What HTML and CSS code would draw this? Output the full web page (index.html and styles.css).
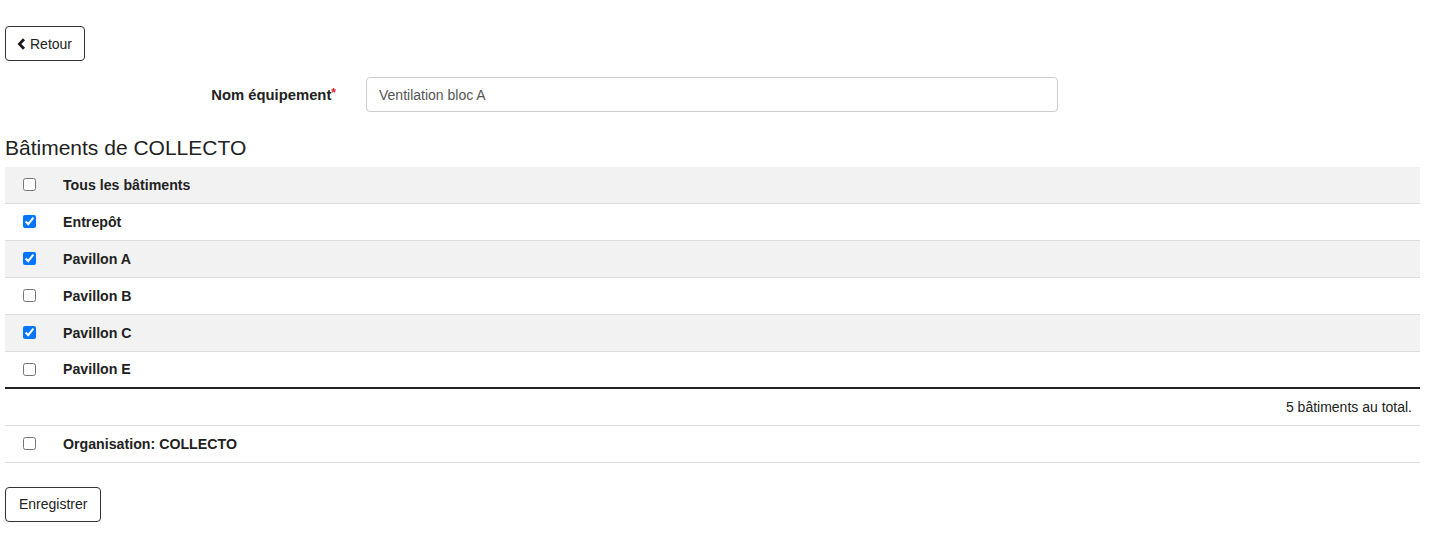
FILE: index.html
```html
<!DOCTYPE html>
<html lang="fr">
<head>
<meta charset="utf-8">
<link rel="stylesheet" href="styles.css">
</head>
<body>
<div class="container">
  <div class="top">
    <button class="btn btn-back" type="button"><svg class="chev" width="9" height="12" viewBox="0 0 9 12"><path d="M7 1.2 L2.4 6 L7 10.8" fill="none" stroke="#1a1a1a" stroke-width="2.8" stroke-linejoin="miter"/></svg>Retour</button>
  </div>
  <div class="form-row">
    <label class="lbl">Nom équipement<span class="req">*</span></label>
    <div class="field"><input class="input" type="text" value="Ventilation bloc A"></div>
  </div>
  <h3 class="title">Bâtiments de COLLECTO</h3>
  <table class="tbl">
    <thead>
      <tr class="grey"><td class="cb"><input type="checkbox"></td><td class="name">Tous les bâtiments</td></tr>
    </thead>
    <tbody>
      <tr><td class="cb"><input type="checkbox" checked></td><td class="name">Entrepôt</td></tr>
      <tr class="grey"><td class="cb"><input type="checkbox" checked></td><td class="name">Pavillon A</td></tr>
      <tr><td class="cb"><input type="checkbox"></td><td class="name">Pavillon B</td></tr>
      <tr class="grey"><td class="cb"><input type="checkbox" checked></td><td class="name">Pavillon C</td></tr>
      <tr class="last"><td class="cb"><input type="checkbox"></td><td class="name">Pavillon E</td></tr>
    </tbody>
    <tfoot>
      <tr class="total"><td colspan="2">5 bâtiments au total.</td></tr>
      <tr class="org"><td class="cb"><input type="checkbox"></td><td class="name">Organisation: COLLECTO</td></tr>
    </tfoot>
  </table>
  <div class="bottom">
    <button class="btn" type="button">Enregistrer</button>
  </div>
</div>
</body>
</html>
```
FILE: styles.css
```css
* { box-sizing: border-box; }
html, body { margin: 0; padding: 0; background: #fff; }
body { font-family: "Liberation Sans", Arial, sans-serif; font-size: 14px; color: #222; }
.container { width: 1415px; padding-left: 5px; }
.top { padding-top: 26px; }
.btn {
  height: 35px; padding: 0 13px; border: 1px solid #333; border-radius: 4px;
  background: #fff; font-family: inherit; font-size: 14px; color: #222;
  display: inline-flex; align-items: center; gap: 4px;
}
.btn-back { padding: 0 12px 0 11px; }
.chev { display: block; }
.form-row { display: flex; margin-top: 16px; align-items: center; }
.lbl { width: 331px; text-align: right; font-weight: bold; font-size: 14.8px; padding-right: 0; }
.req { color: #e02020; font-size: 12px; vertical-align: 3px; }
.field { width: 722px; padding-left: 15px; padding-right: 15px; margin-left: 15px; }
.input {
  width: 692px; height: 35px; border: 1px solid #ccc; border-radius: 4px;
  padding: 0 12px; font-family: inherit; font-size: 14px; color: #555;
}
.title { font-size: 21px; font-weight: normal; margin: 23px 0 6px; line-height: 26px; color: #222; }
.tbl { width: 1415px; border-collapse: collapse; margin-top: 0; }
.tbl td { height: 37px; padding: 0; border-top: 1px solid #ddd; vertical-align: middle; }
.tbl thead td { border-top: none; height: 36px; }
.tbl tr.grey td { background: #f2f2f2; }
.tbl td.cb { width: 58px; padding-left: 18px; }
.tbl td.cb input { margin: 0; width: 13px; height: 13px; display: block; }
.tbl td.name { font-weight: bold; font-size: 14.2px; }
.tbl tr.last td { border-bottom: 2px solid #222; }
.tbl tr.total td { border-top: none; text-align: right; padding-right: 8px; font-size: 14px; }
.tbl tr.org td { border-bottom: 1px solid #ddd; }
.bottom { padding-top: 24px; }
```
